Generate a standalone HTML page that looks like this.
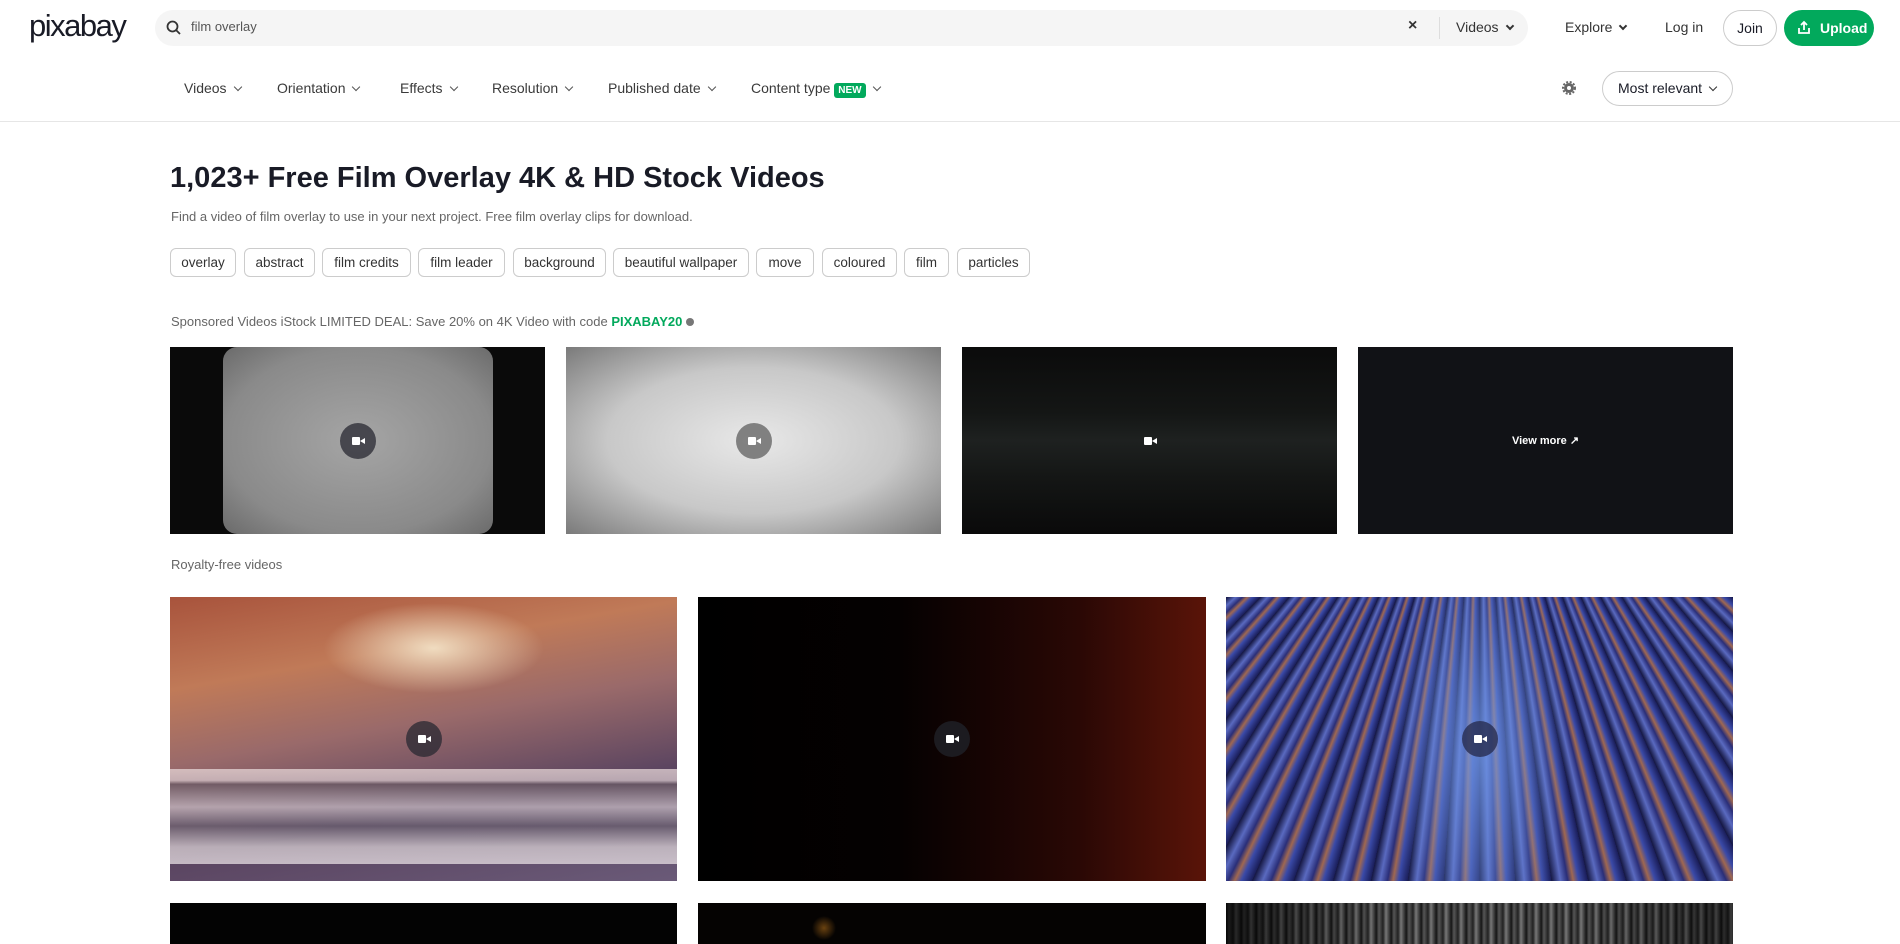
<!DOCTYPE html>
<html><head><meta charset="utf-8"><style>
*{box-sizing:border-box;margin:0;padding:0}
body{width:1900px;height:944px;overflow:hidden;background:#fff;font-family:"Liberation Sans",sans-serif;color:#191b26;position:relative}
.a{position:absolute}
.logo{left:29px;top:8px;font-size:31px;font-weight:400;letter-spacing:-1.5px;color:#191b26}
.search{left:155px;top:10px;width:1373px;height:36px;background:#f5f5f5;border-radius:18px}
.t{font-size:14px;color:#333}
.filt{top:80px;font-size:14px;color:#3a3a3a}
.chev{display:inline-block;width:6px;height:6px;border-right:1.5px solid #555;border-bottom:1.5px solid #555;transform:rotate(45deg);margin-left:8px;position:relative;top:-3px}
.btn{border:1px solid #ccc;border-radius:20px;background:#fff}
.tag{position:absolute;top:248px;height:29px;border:1px solid #ccc;border-radius:6px;font-size:13.5px;color:#333;display:flex;align-items:center;justify-content:center}
.img{position:absolute;overflow:hidden}
.cam{position:absolute;width:36px;height:36px;border-radius:50%;background:rgba(40,40,50,.75);left:50%;top:50%;transform:translate(-50%,-50%)}
.cam:after{content:"";position:absolute;left:12px;top:14px;width:8px;height:8px;background:#fff;border-radius:1px}
.cam:before{content:"";position:absolute;left:20px;top:15px;border:3px solid transparent;border-right:5px solid #fff;border-left:0;}
</style></head><body>
<div class="a logo">pixabay</div>
<div class="a search"></div>
<svg class="a" style="left:166px;top:20px" width="15" height="15" viewBox="0 0 15 15"><circle cx="6.5" cy="6.5" r="5" stroke="#333" stroke-width="1.8" fill="none"/><path d="M10 10l4 4" stroke="#333" stroke-width="1.8"/></svg>
<div class="a t" style="left:191px;top:19px;color:#555;font-size:13px">film overlay</div>
<div class="a" style="left:1408px;top:17px;font-size:16px;font-weight:bold;color:#333">×</div>
<div class="a" style="left:1439px;top:17px;width:1px;height:22px;background:#ddd"></div>
<div class="a t" style="left:1456px;top:19px">Videos<span class="chev" style="border-color:#333;border-width:2px"></span></div>
<div class="a t" style="left:1565px;top:19px">Explore<span class="chev" style="border-color:#333;border-width:2px"></span></div>
<div class="a t" style="left:1665px;top:19px">Log in</div>
<div class="a btn" style="left:1723px;top:10px;width:54px;height:36px;font-size:14px;text-align:center;line-height:34px">Join</div>
<div class="a" style="left:1784px;top:10px;width:90px;height:36px;background:#02a95c;border-radius:18px;color:#fff;font-size:14px;font-weight:bold;line-height:36px;padding-left:36px">Upload</div>
<svg class="a" style="left:1797px;top:20px" width="14" height="15" viewBox="0 0 14 15"><path d="M7 10V2M4 5l3-3 3 3M2 8v5h10V8" stroke="#fff" stroke-width="1.8" fill="none"/></svg>

<div class="a filt" style="left:184px">Videos<span class="chev"></span></div>
<div class="a filt" style="left:277px">Orientation<span class="chev"></span></div>
<div class="a filt" style="left:400px">Effects<span class="chev"></span></div>
<div class="a filt" style="left:492px">Resolution<span class="chev"></span></div>
<div class="a filt" style="left:608px">Published date<span class="chev"></span></div>
<div class="a filt" style="left:751px">Content type <span style="background:#02a95c;color:#fff;font-size:10px;font-weight:bold;padding:2px 4px;border-radius:3px">NEW</span><span class="chev"></span></div>
<svg class="a" style="left:1562px;top:81px" width="14" height="14" viewBox="0 0 14 14"><circle cx="7" cy="7" r="5" fill="#666"/><circle cx="7" cy="7" r="6" fill="none" stroke="#666" stroke-width="2" stroke-dasharray="2 1.6"/><circle cx="7" cy="7" r="2" fill="#fff"/></svg>
<div class="a btn" style="left:1602px;top:71px;width:131px;height:35px;font-size:14px;line-height:33px;padding-left:15px">Most relevant<span class="chev" style="border-color:#333"></span></div>
<div class="a" style="left:0;top:121px;width:1900px;height:1px;background:#e6e6e6"></div>

<div class="a" style="left:170px;top:162px;font-size:29px;font-weight:bold;color:#191b26">1,023+ Free Film Overlay 4K &amp; HD Stock Videos</div>
<div class="a" style="left:171px;top:209px;font-size:13px;color:#666">Find a video of film overlay to use in your next project. Free film overlay clips for download.</div>
<div class="tag" style="left:170px;width:66px">overlay</div>
<div class="tag" style="left:244px;width:71px">abstract</div>
<div class="tag" style="left:322px;width:89px">film credits</div>
<div class="tag" style="left:418px;width:87px">film leader</div>
<div class="tag" style="left:513px;width:93px">background</div>
<div class="tag" style="left:613px;width:136px">beautiful wallpaper</div>
<div class="tag" style="left:756px;width:58px">move</div>
<div class="tag" style="left:822px;width:75px">coloured</div>
<div class="tag" style="left:904px;width:45px">film</div>
<div class="tag" style="left:957px;width:73px">particles</div>
<div class="a" style="left:171px;top:314px;font-size:13px;color:#666">Sponsored Videos iStock LIMITED DEAL: Save 20% on 4K Video with code <b style="color:#02a95c">PIXABAY20</b> <span style="display:inline-block;width:8px;height:8px;border-radius:50%;background:#777"></span></div>

<div class="img" style="left:170px;top:347px;width:375px;height:187px;background:#0a0a0a"><div style="position:absolute;left:53px;top:0;width:270px;height:187px;background:radial-gradient(ellipse at center,#a5a5a5,#8a8a8a 70%,#6a6a6a);border-radius:14px"></div><div class="cam"></div></div>
<div class="img" style="left:566px;top:347px;width:375px;height:187px;background:radial-gradient(ellipse at center,#e8e8e8 0%,#c8c8c8 55%,#7a7a7a 100%)"><div class="cam" style="background:rgba(110,110,110,.85)"></div></div>
<div class="img" style="left:962px;top:347px;width:375px;height:187px;background:linear-gradient(#0b0b0b,#141615 35%,#1e2120 50%,#141615 70%,#0a0a0a)"><div class="cam" style="background:none"></div></div>
<div class="img" style="left:1358px;top:347px;width:375px;height:187px;background:#111216"><div style="position:absolute;width:100%;top:87px;text-align:center;color:#fff;font-size:11px;font-weight:bold">View more ↗</div></div>

<div class="a" style="left:171px;top:557px;font-size:13px;color:#666">Royalty-free videos</div>

<div class="img" style="left:170px;top:597px;width:507px;height:284px;background:radial-gradient(ellipse 110px 45px at 52% 18%,#f0dcc0,rgba(240,200,160,0) 100%),linear-gradient(170deg,#a8533c 0%,#c07a58 25%,#9a6a6a 45%,#5a4460 70%,#6a5a78 100%)">
<div style="position:absolute;left:0;top:172px;width:100%;height:95px;background:linear-gradient(#e8d8d8 0,#d8c8cc 12%,#6a5a64 16%,#c8bcc4 40%,#6a6070 60%,#d8d0d4 82%,#e8e0e4 100%);opacity:.75"></div><div class="cam"></div></div>
<div class="img" style="left:698px;top:597px;width:508px;height:284px;background:linear-gradient(90deg,#000 0%,#050101 40%,#2a0805 75%,#5a1408 100%)"><div class="cam" style="background:rgba(30,30,36,.9)"></div></div>
<div class="img" style="left:1226px;top:597px;width:507px;height:284px;background:radial-gradient(ellipse 90px 220px at 50% 55%,rgba(110,150,230,.8),rgba(40,60,160,0)),repeating-conic-gradient(from 0deg at 50% -80%,#1a1d58 0deg,#3a4aa8 1deg,#a06850 1.6deg,#2a2e78 2.2deg,#5a6ac0 3deg,#141640 4deg)"><div class="cam" style="background:rgba(40,45,80,.8)"></div></div>

<div class="img" style="left:170px;top:903px;width:507px;height:41px;background:#030303"></div>
<div class="img" style="left:698px;top:903px;width:508px;height:41px;background:radial-gradient(circle 12px at 126px 25px,#6a4210,transparent),#050302"></div>
<div class="img" style="left:1226px;top:903px;width:507px;height:41px;background:linear-gradient(90deg,rgba(0,0,0,.7),rgba(0,0,0,0) 30%,rgba(0,0,0,0) 70%,rgba(0,0,0,.5)),repeating-linear-gradient(90deg,#111 0,#555 3px,#222 7px,#777 10px,#1a1a1a 15px)"></div>
</body></html>
